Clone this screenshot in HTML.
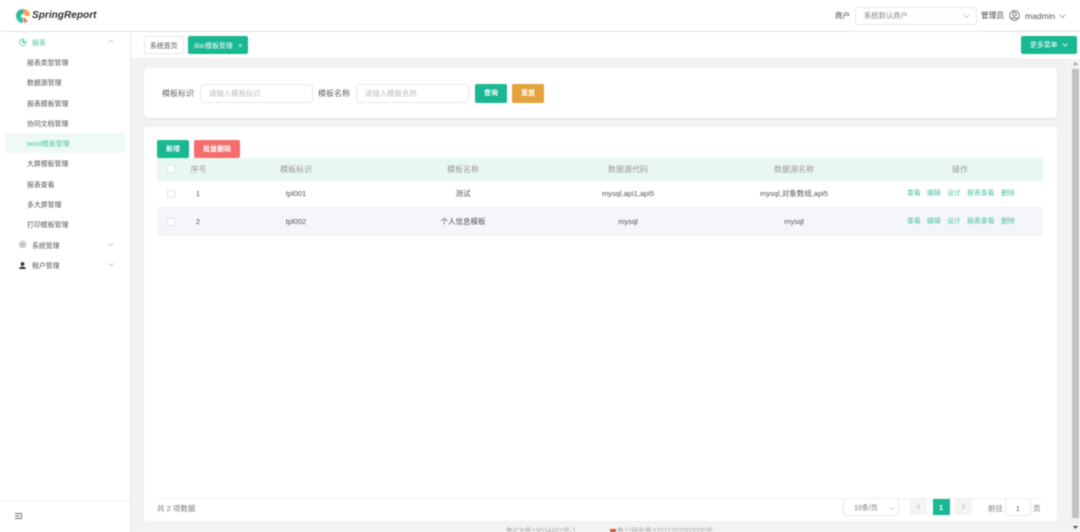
<!DOCTYPE html>
<html lang="zh"><head><meta charset="utf-8"><style>
*{box-sizing:border-box}
html,body{margin:0;padding:0;width:1080px;height:532px;overflow:hidden;background:#fff}
#r{position:relative;width:1080px;height:532px;overflow:hidden;background:#f2f2f2;font-family:"Liberation Sans","Noto Sans CJK SC",sans-serif;font-size:7.5px;color:#555;filter:blur(.4px)}
.a{position:absolute}
.t{position:absolute;white-space:nowrap;line-height:12px}
.c{position:absolute;white-space:nowrap;line-height:12px;transform:translateX(-50%)}
.box{position:absolute;background:#fff;border:1px solid #e6e8ec;border-radius:3px}
.btn{position:absolute;border-radius:2px;color:#fff;text-align:center;font-size:7px;font-weight:700}
.cb{position:absolute;width:8px;height:8px;background:#fff;border:1px solid #e2e4e8}
.m{left:27px;color:#555;font-size:6.9px}
.g{color:#4cc2a5}
.o{font-size:6.9px}
.h{color:#999;font-size:8px}
svg{position:absolute;overflow:visible}
</style></head><body><div id="r">
<div class="a" style="left:0;top:0;width:1080px;height:32px;background:#fff;border-bottom:1px solid #e4e4e4"></div>
<svg style="left:16px;top:9px" width="14" height="14" viewBox="0 0 14 14"><path d="M7 7 L7 0 A7 7 0 0 1 14 7 Z" fill="#f4a35c"/><path d="M7 0 A7 7 0 0 0 0 7 L7 7 Z" fill="#2fb89a"/><path d="M0 7 A7 7 0 0 0 7 14 L7 7 Z" fill="#35c2a2"/><path d="M7 7 L12 12 A7 7 0 0 1 8 14 Z" fill="#f2836b"/><circle cx="7" cy="7" r="2" fill="#fff"/></svg>
<div class="t" style="left:32px;top:9px;font-size:10.1px;line-height:14px;font-weight:700;font-style:italic;color:#333">SpringReport</div>
<div class="t" style="left:835px;top:10px;color:#444">商户</div>
<div class="box" style="left:855px;top:7px;width:122px;height:18px"></div>
<div class="t" style="left:864px;top:10px;color:#888;font-size:7.3px">系统默认商户</div>
<svg style="left:963px;top:14px" width="7" height="4" viewBox="0 0 7 4"><path d="M.5.5 3.5 3.5 6.500.5" fill="none" stroke="#bbb" stroke-width=".8"/></svg>
<div class="t" style="left:981px;top:10px;color:#444;font-size:7.7px">管理员</div>
<svg style="left:1009px;top:10px" width="11" height="11" viewBox="0 0 11 11"><circle cx="5.500" cy="5.500" r="4.800" fill="none" stroke="#555" stroke-width=".8"/><circle cx="5.500" cy="4.300" r="1.800" fill="none" stroke="#555" stroke-width=".8"/><path d="M2.300 9C3 7.300 8 7.300 8.700 9" fill="none" stroke="#555" stroke-width=".8"/></svg>
<div class="t" style="left:1025px;top:10px;font-size:8.500px;color:#555">madmin</div>
<svg style="left:1059px;top:14px" width="7" height="4" viewBox="0 0 7 4"><path d="M.5.5 3.500 3.500 6.500.5" fill="none" stroke="#999" stroke-width=".8"/></svg>

<div class="a" style="left:0;top:32px;width:131px;height:500px;background:#fff;border-right:1px solid #e8e8e8"></div>
<svg style="left:19px;top:38px" width="8" height="8" viewBox="0 0 8 8"><path d="M3.500 1A3.300 3.300 0 1 0 7 4.500H3.500Z M4.500.5V3.500H7.500" fill="none" stroke="#4cc2a5" stroke-width=".7"/></svg>
<div class="t g" style="left:32px;top:38px;font-size:6.9px">报表</div>
<svg style="left:108px;top:40px" width="6" height="3" viewBox="0 0 6 3"><path d="M.5 2.800 3 .5 5.500 2.800" fill="none" stroke="#aaa" stroke-width=".6"/></svg>
<div class="t m" style="top:58px">报表类型管理</div>
<div class="t m" style="top:78px">数据源管理</div>
<div class="t m" style="top:99px">报表模板管理</div>
<div class="t m" style="top:119px">协同文档管理</div>
<div class="a" style="left:5px;top:133px;width:120px;height:20px;background:#effaf6;border-radius:2px"></div>
<div class="t m g" style="top:139px">word模板管理</div>
<div class="t m" style="top:159px">大屏模板管理</div>
<div class="t m" style="top:180px">报表查看</div>
<div class="t m" style="top:200px">多大屏管理</div>
<div class="t m" style="top:220px">打印模板管理</div>
<svg style="left:19px;top:241px" width="7" height="7" viewBox="0 0 7 7"><circle cx="3.500" cy="3.500" r="3" fill="none" stroke="#666" stroke-width=".8" stroke-dasharray="1 .5"/><circle cx="3.500" cy="3.500" r="1.200" fill="none" stroke="#666" stroke-width=".6"/></svg>
<div class="t" style="left:32px;top:241px;font-size:6.9px">系统管理</div>
<svg style="left:108px;top:243px" width="6" height="3" viewBox="0 0 6 3"><path d="M.5.300 3 2.500 5.500.300" fill="none" stroke="#aaa" stroke-width=".6"/></svg>
<svg style="left:19px;top:262px" width="7" height="7" viewBox="0 0 7 7"><circle cx="3.500" cy="2" r="1.900" fill="#333"/><path d="M0 7C.3 3.800 6.700 3.800 7 7Z" fill="#333"/></svg>
<div class="t" style="left:32px;top:261px;font-size:6.9px">租户管理</div>
<svg style="left:108px;top:263px" width="6" height="3" viewBox="0 0 6 3"><path d="M.5.300 3 2.500 5.500.300" fill="none" stroke="#aaa" stroke-width=".6"/></svg>
<div class="a" style="left:0;top:500px;width:130px;height:1px;background:#eee"></div>
<svg style="left:15px;top:513px" width="7" height="6" viewBox="0 0 7 6"><path d="M0 .5H7M0 3H4.500M0 5.500H7M6.500 1.500V4.500" fill="none" stroke="#444" stroke-width=".8"/></svg>

<div class="a" style="left:131px;top:32px;width:949px;height:26px;background:#fff"></div>
<div class="box" style="left:144px;top:36px;width:40px;height:18px;border-radius:2px"></div>
<div class="t" style="left:150px;top:41px;color:#555;font-size:6.9px">系统首页</div>
<div class="a" style="left:188px;top:36px;width:60px;height:18px;background:#19b792;border-radius:2px"></div>
<div class="t" style="left:194px;top:41px;color:#fff;font-size:6.9px">doc模板管理</div>
<div class="t" style="left:238px;top:40px;color:#fff">×</div>
<div class="a" style="left:1018px;top:32px;width:62px;height:27px;background:#fff;box-shadow:0 0 3px rgba(0,0,0,.08)"></div>
<div class="btn" style="left:1021px;top:36px;width:56px;height:18px;background:#19b792"></div>
<div class="t" style="left:1030px;top:40px;color:#fff;font-size:6.9px">更多菜单</div>
<svg style="left:1062px;top:43px" width="6" height="4" viewBox="0 0 6 4"><path d="M.5.500 3 3 5.500.500" fill="none" stroke="#fff" stroke-width=".8"/></svg>

<div class="a" style="left:1071px;top:59px;width:9px;height:473px;background:#f1f1f1"></div>
<div class="a" style="left:1072px;top:69px;width:7px;height:449px;background:#c1c1c1"></div>
<svg style="left:1073px;top:62px" width="5" height="3" viewBox="0 0 5 3"><path d="M0 3 2.500 0 5 3Z" fill="#a0a0a0"/></svg>
<svg style="left:1073px;top:526px" width="5" height="3" viewBox="0 0 5 3"><path d="M0 0 2.500 3 5 0Z" fill="#505050"/></svg>

<div class="a" style="left:144px;top:68px;width:913px;height:50px;background:#fff;border-radius:4px;box-shadow:0 1px 2px rgba(0,0,0,.07)"></div>
<div class="t" style="left:162px;top:88px;font-size:8px;color:#666">模板标识</div>
<div class="box" style="left:200px;top:84px;width:113px;height:19px"></div>
<div class="t" style="left:209px;top:88px;color:#bbb;font-size:7.4px">请输入模板标识</div>
<div class="t" style="left:318px;top:88px;font-size:8px;color:#666">模板名称</div>
<div class="box" style="left:356px;top:84px;width:113px;height:19px"></div>
<div class="t" style="left:365px;top:88px;color:#bbb;font-size:7.4px">请输入模板名称</div>
<div class="btn" style="left:475px;top:84px;width:32px;height:19px;line-height:19px;background:#19b792">查询</div>
<div class="btn" style="left:512px;top:84px;width:32px;height:19px;line-height:19px;background:#e6a23c">重置</div>

<div class="a" style="left:144px;top:127px;width:913px;height:394px;background:#fff;border-radius:4px"></div>
<div class="btn" style="left:157px;top:140px;width:32px;height:18px;line-height:19px;background:#19b792">新增</div>
<div class="btn" style="left:194px;top:140px;width:46px;height:18px;line-height:19px;background:#f56c6c">批量删除</div>
<div class="a" style="left:157px;top:158px;width:886px;height:23px;background:#e8f7f1"></div>
<div class="a" style="left:157px;top:207px;width:886px;height:1px;background:#f0f1f3"></div>
<div class="a" style="left:157px;top:208px;width:886px;height:28px;background:#f5f6fa;border-bottom:1px solid #eef0f2"></div>
<div class="cb" style="left:167px;top:165px"></div>
<div class="cb" style="left:167px;top:190px"></div>
<div class="cb" style="left:167px;top:218px"></div>
<div class="c h" style="left:198.500px;top:164px">序号</div>
<div class="c h" style="left:296px;top:164px">模板标识</div>
<div class="c h" style="left:463px;top:164px">模板名称</div>
<div class="c h" style="left:628px;top:164px">数据源代码</div>
<div class="c h" style="left:794px;top:164px">数据源名称</div>
<div class="c h" style="left:960px;top:164px">操作</div>
<div class="c" style="left:198px;top:188px">1</div>
<div class="c" style="left:296px;top:188px">tpl001</div>
<div class="c" style="left:463px;top:188px">测试</div>
<div class="c" style="left:628px;top:188px">mysql,api1,api5</div>
<div class="c" style="left:794px;top:188px">mysql,对象数组,api5</div>
<div class="t g o" style="left:907px;top:188px">查看</div><div class="t g o" style="left:927px;top:188px">编辑</div><div class="t g o" style="left:947px;top:188px">设计</div><div class="t g o" style="left:967px;top:188px">报表查看</div><div class="t g o" style="left:1001px;top:188px">删除</div>
<div class="c" style="left:198px;top:216px">2</div>
<div class="c" style="left:296px;top:216px">tpl002</div>
<div class="c" style="left:463px;top:216px">个人信息模板</div>
<div class="c" style="left:628px;top:216px">mysql</div>
<div class="c" style="left:794px;top:216px">mysql</div>
<div class="t g o" style="left:907px;top:216px">查看</div><div class="t g o" style="left:927px;top:216px">编辑</div><div class="t g o" style="left:947px;top:216px">设计</div><div class="t g o" style="left:967px;top:216px">报表查看</div><div class="t g o" style="left:1001px;top:216px">删除</div>

<div class="a" style="left:157px;top:498px;width:886px;height:1px;background:#eee"></div>
<div class="t" style="left:157px;top:503px;color:#777;font-size:7.500px">共 2 项数据</div>
<div class="box" style="left:843px;top:499px;width:56px;height:17px;border-top:0"></div>
<div class="t" style="left:854px;top:503px;color:#777;font-size:7px">10条/页</div>
<svg style="left:889px;top:507px" width="6" height="3" viewBox="0 0 6 3"><path d="M.5.300 3 2.500 5.500.300" fill="none" stroke="#bbb" stroke-width=".6"/></svg>
<div class="a" style="left:910px;top:499px;width:17px;height:16px;background:#f4f4f5"></div>
<svg style="left:917px;top:504px" width="3" height="5" viewBox="0 0 3 5"><path d="M2.800.3.500 2.500 2.800 4.700" fill="none" stroke="#bbb" stroke-width=".8"/></svg>
<div class="a" style="left:933px;top:499px;width:17px;height:16px;background:#19b792"></div>
<div class="t" style="left:939px;top:502px;color:#fff;font-weight:700">1</div>
<div class="a" style="left:955px;top:499px;width:17px;height:16px;background:#f4f4f5"></div>
<svg style="left:962px;top:504px" width="3" height="5" viewBox="0 0 3 5"><path d="M.2.3 2.500 2.500.2 4.700" fill="none" stroke="#bbb" stroke-width=".8"/></svg>
<div class="t" style="left:988px;top:503px;color:#777">前往</div>
<div class="box" style="left:1005px;top:499px;width:26px;height:17px;border-top:0"></div>
<div class="c" style="left:1018px;top:503px;color:#666">1</div>
<div class="t" style="left:1033px;top:503px;color:#777">页</div>
<div class="t" style="left:506px;top:526px;color:#aaa;font-size:7px">鲁ICP备19034482号-1</div>
<div class="a" style="left:610px;top:529px;width:6px;height:3px;background:#c9563a"></div>
<div class="t" style="left:617px;top:526px;color:#aaa;font-size:7px">鲁公网安备37011202000000号</div>
</div></body></html>
